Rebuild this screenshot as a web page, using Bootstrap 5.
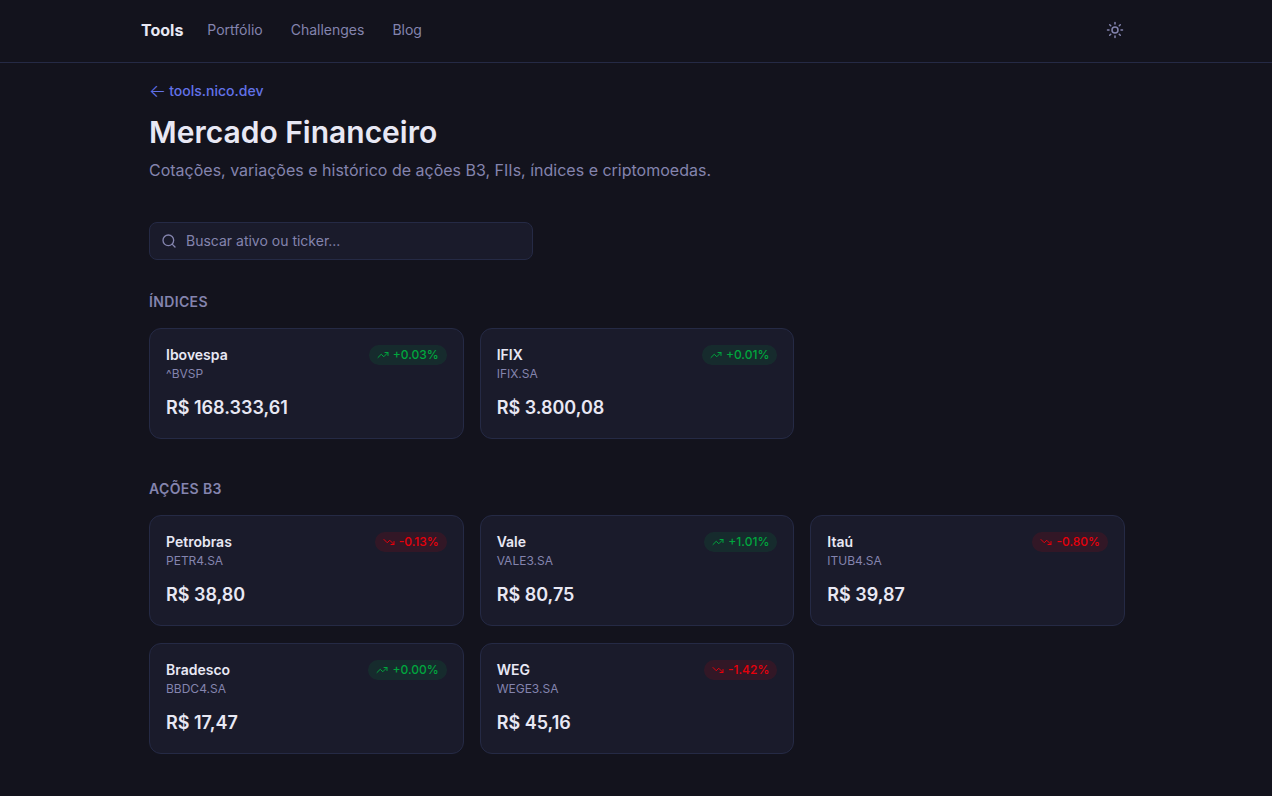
<!DOCTYPE html>
<html lang="pt-BR" data-bs-theme="dark">
<head>
<meta charset="utf-8">
<meta name="viewport" content="width=device-width, initial-scale=1">
<title>Mercado Financeiro</title>
<link rel="stylesheet" href="https://cdn.jsdelivr.net/npm/bootstrap@5.3.0/dist/css/bootstrap.min.css">
<style>
:root{--page:#13131d;--panel:#1a1b2b;--line:#252a45;--ink:#e8e8f4;--dim:#8484ae;--accent:#6272e8;--up:#00a63e;--down:#e7000b}
body{background:var(--page);color:var(--ink);font-family:Inter,"Liberation Sans",sans-serif;font-size:14px;line-height:20px}
.topbar{border-bottom:1px solid var(--line)}
.topbar-inner{max-width:1024px;padding:12px 15px 14px 17px}
.brand-link{font-size:16px;line-height:24px;color:var(--ink)}
.menu-list{gap:28px}
.menu-link{color:var(--dim)}
.theme-btn{width:36px;height:36px;color:var(--dim)}
.page{max-width:1024px;padding:18px 23px 42px 25px}
.back-link{color:var(--accent);gap:3px}
.arrow{font-size:18px;font-weight:300}
h1{font-size:30px;line-height:36px;margin:13px 0 8px;color:var(--ink)}
.intro{font-size:16px;line-height:24px;color:var(--dim);margin-bottom:40px}
.search{max-width:384px;height:38px;padding:0 11px;gap:9px;background:var(--panel);border:1px solid var(--line);border-radius:8px;color:var(--dim)}
.search input{background:transparent;border:0;outline:0;padding:0;color:var(--ink)}
.search input::placeholder{color:var(--dim);opacity:1}
.group{margin-top:32px}
.group + .group{margin-top:40px}
h2{font-size:14px;line-height:20px;letter-spacing:.35px;margin-bottom:16px;color:var(--dim)}
.quotes{--bs-gutter-y:17px}
.quote{background:var(--panel);border:1px solid var(--line);border-radius:12px;padding:16px;color:var(--ink)}
.quote:hover{color:var(--ink)}
.quote-name{font-size:14px;line-height:20px}
.ticker{font-size:12px;line-height:18px;color:var(--dim)}
.price{font-size:18px;line-height:28px;margin-top:11px}
.change{font-size:12px;line-height:16px;padding:2px 8px}
.up{color:var(--up);background:#00a63e1f}
.down{color:var(--down);background:#e7000b1f}
</style>
</head>
<body>
<svg class="d-none" xmlns="http://www.w3.org/2000/svg">
<symbol id="trend-up" viewBox="0 0 24 24"><path d="M22 7 13.5 15.5 8.5 10.5 2 17M16 7h6v6"/></symbol>
<symbol id="trend-down" viewBox="0 0 24 24"><path d="M22 17 13.5 8.5 8.5 13.5 2 7M16 17h6v-6"/></symbol>
</svg>
<header class="topbar">
<nav class="topbar-inner mx-auto d-flex align-items-center">
<a class="brand-link fw-bold text-decoration-none me-4" href="#">Tools</a>
<div class="menu-list d-flex">
<a class="menu-link text-decoration-none" href="#">Portfólio</a>
<a class="menu-link text-decoration-none" href="#">Challenges</a>
<a class="menu-link text-decoration-none" href="#">Blog</a>
</div>
<button class="theme-btn btn border-0 p-0 ms-auto d-flex align-items-center justify-content-center" type="button" aria-label="Alternar tema">
<svg width="18" height="18" viewBox="0 0 24 24" fill="none" stroke="currentColor" stroke-width="2" stroke-linecap="round" stroke-linejoin="round"><circle cx="12" cy="12" r="4"/><path d="M12 2v2M12 20v2M4.93 4.93l1.41 1.41M17.66 17.66l1.41 1.41M2 12h2M20 12h2M6.34 17.66l-1.41 1.41M19.07 4.93l-1.41 1.41"/></svg>
</button>
</nav>
</header>
<main class="page mx-auto">
<div class="d-flex"><a class="back-link d-flex align-items-center fw-medium text-decoration-none" href="#"><span class="arrow">←</span> <span>tools.nico.dev</span></a></div>
<h1 class="fw-semibold">Mercado Financeiro</h1>
<p class="intro">Cotações, variações e histórico de ações B3, FIIs, índices e criptomoedas.</p>
<div class="search d-flex align-items-center">
<svg class="flex-shrink-0" width="16" height="16" viewBox="0 0 24 24" fill="none" stroke="currentColor" stroke-width="2" stroke-linecap="round" stroke-linejoin="round"><circle cx="11" cy="11" r="8"/><path d="m21 21-4.3-4.3"/></svg>
<input class="w-100" type="text" placeholder="Buscar ativo ou ticker..." aria-label="Buscar ativo ou ticker">
</div>
<section class="group">
<h2 class="fw-semibold">ÍNDICES</h2>
<div class="quotes row row-cols-1 row-cols-sm-2 row-cols-lg-3 gx-3">
<div><a class="quote d-block text-decoration-none" href="#"><div class="d-flex justify-content-between align-items-start"><span class="quote-name fw-semibold">Ibovespa</span><span class="change up rounded-pill fw-medium d-flex align-items-center gap-1"><svg width="12" height="12" fill="none" stroke="currentColor" stroke-width="2" stroke-linecap="round" stroke-linejoin="round"><use href="#trend-up"/></svg>+0.03%</span></div><div class="ticker">^BVSP</div><div class="price fw-semibold">R$ 168.333,61</div></a></div>
<div><a class="quote d-block text-decoration-none" href="#"><div class="d-flex justify-content-between align-items-start"><span class="quote-name fw-semibold">IFIX</span><span class="change up rounded-pill fw-medium d-flex align-items-center gap-1"><svg width="12" height="12" fill="none" stroke="currentColor" stroke-width="2" stroke-linecap="round" stroke-linejoin="round"><use href="#trend-up"/></svg>+0.01%</span></div><div class="ticker">IFIX.SA</div><div class="price fw-semibold">R$ 3.800,08</div></a></div>
</div>
</section>
<section class="group">
<h2 class="fw-semibold">AÇÕES B3</h2>
<div class="quotes row row-cols-1 row-cols-sm-2 row-cols-lg-3 gx-3">
<div><a class="quote d-block text-decoration-none" href="#"><div class="d-flex justify-content-between align-items-start"><span class="quote-name fw-semibold">Petrobras</span><span class="change down rounded-pill fw-medium d-flex align-items-center gap-1"><svg width="12" height="12" fill="none" stroke="currentColor" stroke-width="2" stroke-linecap="round" stroke-linejoin="round"><use href="#trend-down"/></svg>-0.13%</span></div><div class="ticker">PETR4.SA</div><div class="price fw-semibold">R$ 38,80</div></a></div>
<div><a class="quote d-block text-decoration-none" href="#"><div class="d-flex justify-content-between align-items-start"><span class="quote-name fw-semibold">Vale</span><span class="change up rounded-pill fw-medium d-flex align-items-center gap-1"><svg width="12" height="12" fill="none" stroke="currentColor" stroke-width="2" stroke-linecap="round" stroke-linejoin="round"><use href="#trend-up"/></svg>+1.01%</span></div><div class="ticker">VALE3.SA</div><div class="price fw-semibold">R$ 80,75</div></a></div>
<div><a class="quote d-block text-decoration-none" href="#"><div class="d-flex justify-content-between align-items-start"><span class="quote-name fw-semibold">Itaú</span><span class="change down rounded-pill fw-medium d-flex align-items-center gap-1"><svg width="12" height="12" fill="none" stroke="currentColor" stroke-width="2" stroke-linecap="round" stroke-linejoin="round"><use href="#trend-down"/></svg>-0.80%</span></div><div class="ticker">ITUB4.SA</div><div class="price fw-semibold">R$ 39,87</div></a></div>
<div><a class="quote d-block text-decoration-none" href="#"><div class="d-flex justify-content-between align-items-start"><span class="quote-name fw-semibold">Bradesco</span><span class="change up rounded-pill fw-medium d-flex align-items-center gap-1"><svg width="12" height="12" fill="none" stroke="currentColor" stroke-width="2" stroke-linecap="round" stroke-linejoin="round"><use href="#trend-up"/></svg>+0.00%</span></div><div class="ticker">BBDC4.SA</div><div class="price fw-semibold">R$ 17,47</div></a></div>
<div><a class="quote d-block text-decoration-none" href="#"><div class="d-flex justify-content-between align-items-start"><span class="quote-name fw-semibold">WEG</span><span class="change down rounded-pill fw-medium d-flex align-items-center gap-1"><svg width="12" height="12" fill="none" stroke="currentColor" stroke-width="2" stroke-linecap="round" stroke-linejoin="round"><use href="#trend-down"/></svg>-1.42%</span></div><div class="ticker">WEGE3.SA</div><div class="price fw-semibold">R$ 45,16</div></a></div>
</div>
</section>
</main>
<script src="https://cdn.jsdelivr.net/npm/bootstrap@5.3.0/dist/js/bootstrap.bundle.min.js"></script>
</body>
</html>
